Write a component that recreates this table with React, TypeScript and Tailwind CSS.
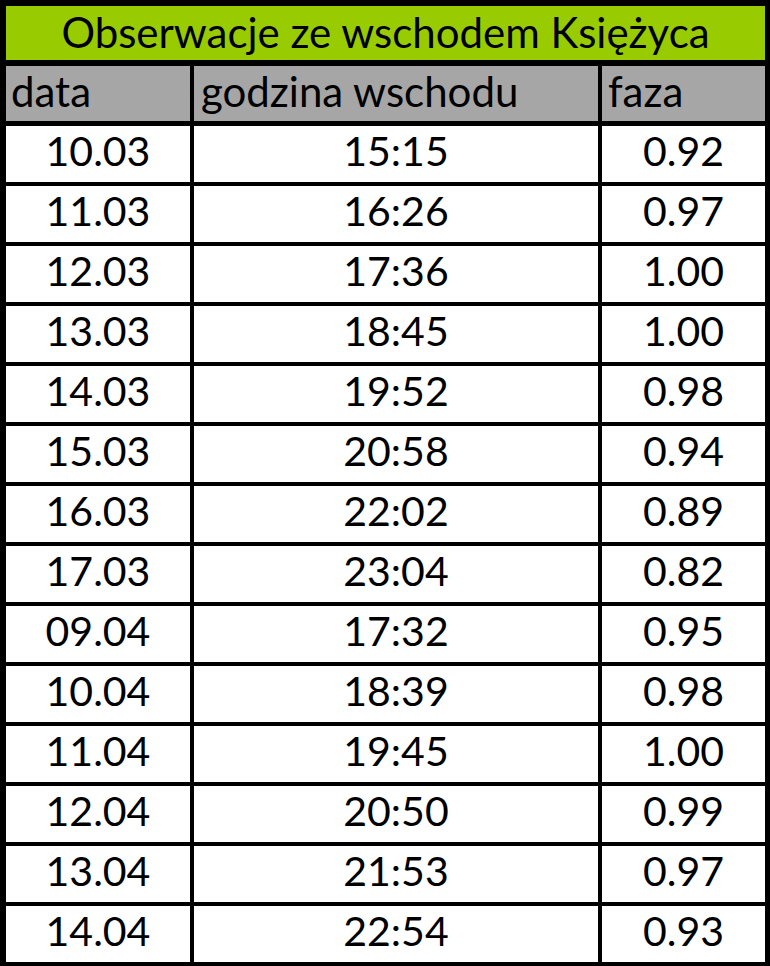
import React from 'react'

const rows: [string, string, string][] = [
  ['10.03', '15:15', '0.92'],
  ['11.03', '16:26', '0.97'],
  ['12.03', '17:36', '1.00'],
  ['13.03', '18:45', '1.00'],
  ['14.03', '19:52', '0.98'],
  ['15.03', '20:58', '0.94'],
  ['16.03', '22:02', '0.89'],
  ['17.03', '23:04', '0.82'],
  ['09.04', '17:32', '0.95'],
  ['10.04', '18:39', '0.98'],
  ['11.04', '19:45', '1.00'],
  ['12.04', '20:50', '0.99'],
  ['13.04', '21:53', '0.97'],
  ['14.04', '22:54', '0.93'],
]

const App = () => {
  return (
    <div
      className="w-[770px] h-[966px] bg-black pt-[6px] pl-[6px] pr-[5px] pb-[7px] text-black text-[41px] leading-none"
      style={{ fontFamily: 'Lato, "Noto Sans", sans-serif' }}
    >
      <div className="grid grid-cols-[184px_404px_163px] auto-rows-[56px] gap-[4px]">
        <div className="col-span-3 h-[54px] bg-[#99cc00] flex items-center justify-center pb-[3px] text-[42px]">
          Obserwacje ze wschodem Księżyca
        </div>
        <div className="h-[55px] bg-[#a6a6a6] flex items-end pl-[5px] pb-[9px] text-[42px]">data</div>
        <div className="h-[55px] bg-[#a6a6a6] flex items-end pl-[7px] pb-[9px] text-[42px]">godzina wschodu</div>
        <div className="h-[55px] bg-[#a6a6a6] flex items-end pl-[6px] pb-[9px] text-[42px]">faza</div>
        {rows.map((r) => (
          <React.Fragment key={r[0]}>
            <div className="bg-white flex items-center justify-center pb-[7px]">{r[0]}</div>
            <div className="bg-white flex items-center justify-center pb-[7px]">{r[1]}</div>
            <div className="bg-white flex items-center justify-center pb-[7px]">{r[2]}</div>
          </React.Fragment>
        ))}
      </div>
    </div>
  )
}

export default App
